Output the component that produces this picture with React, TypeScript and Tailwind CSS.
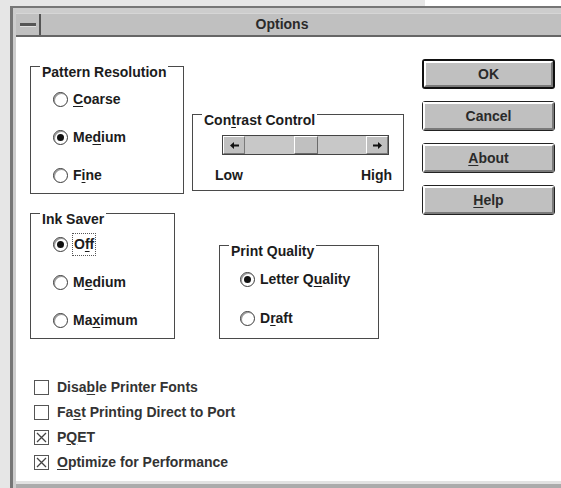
import React from "react";

const font = "font-['Liberation_Sans',Arial,sans-serif]";

type Mn = { pre: string; key: string; post: string };

const Text: React.FC<{ t: Mn }> = ({ t }) => (
  <span>
    {t.pre}
    <span className="underline underline-offset-2">{t.key}</span>
    {t.post}
  </span>
);

const Radio: React.FC<{ checked?: boolean; t: Mn; focus?: boolean }> = ({ checked, t, focus }) => (
  <div className="flex items-center h-[20px]">
    <div className="w-[15px] h-[15px] rounded-full border border-[#3a3a3a] bg-white shadow-[inset_1px_1px_0_#9a9a9a] flex items-center justify-center shrink-0">
      {checked && <div className="w-[7px] h-[7px] rounded-full bg-[#111]" />}
    </div>
    <div className={focus ? "ml-[4px] px-[1px] border border-dotted border-[#555]" : "ml-[5px]"}>
      <Text t={t} />
    </div>
  </div>
);

const Check: React.FC<{ checked?: boolean; t: Mn }> = ({ checked, t }) => (
  <div className="flex items-center h-[25px]">
    <div className="w-[15px] h-[15px] border border-[#555] bg-white flex items-center justify-center shrink-0">
      {checked && (
        <svg width="11" height="11" viewBox="0 0 11 11">
          <path d="M1 1 L10 10 M10 1 L1 10" stroke="#444" strokeWidth="1.3" />
        </svg>
      )}
    </div>
    <div className="ml-[8px] text-[#333]">
      <Text t={t} />
    </div>
  </div>
);

const Group: React.FC<{ title: React.ReactNode; className: string; children: React.ReactNode }> = ({
  title,
  className,
  children,
}) => (
  <div className={`relative border border-[#4a4a4a] shrink-0 ${className}`}>
    <div className="absolute top-[-3px] left-[9px] bg-white px-[2px] leading-[16px]">{title}</div>
    {children}
  </div>
);

const Button: React.FC<{ t: Mn; def?: boolean }> = ({ t, def }) => (
  <div
    className={`w-[133px] h-[30px] rounded-[3px] bg-[#c0c0c0] ${
      def ? "border-2 border-[#111]" : "border border-[#222]"
    }`}
  >
    <div className="h-full border-t-2 border-l-2 border-white border-b-2 border-r-2 border-b-[#7a7a7a] border-r-[#7a7a7a] flex items-center justify-center text-[#2a2a2a]">
      <Text t={t} />
    </div>
  </div>
);

const Arrow: React.FC<{ right?: boolean }> = ({ right }) => (
  <div className="w-[22px] h-full bg-[#c0c0c0] border-t border-l border-white border-b border-r border-b-[#7a7a7a] border-r-[#7a7a7a] flex items-center justify-center">
    <svg width="9" height="7" viewBox="0 0 9 7" className={right ? "rotate-180" : ""}>
      <path d="M0 3.5 L4 0 L4 2.5 L9 2.5 L9 4.5 L4 4.5 L4 7 Z" fill="#111" />
    </svg>
  </div>
);

export default function App() {
  return (
    <div className={`w-[561px] h-[488px] overflow-hidden bg-[#e6e6e6] text-[14px] font-bold text-[#1c1c1c] ${font}`}>
      <div className="flex h-[6px]">
        <div className="w-[425px] bg-[#e6e6e6]" />
        <div className="flex-1 bg-white" />
      </div>
      <div className="ml-[10px] h-[482px] border-t-2 border-l-[3px] border-[#767676] bg-[#cdcdcd] pt-[5px] pl-[3px] flex flex-col">
        {/* title bar */}
        <div className="flex h-[24px] bg-[#c0c0c0] border-t border-[#d6d6d6] border-b-2 border-b-[#666]">
          <div className="w-[25px] border-r-2 border-[#555] flex items-center">
            <div className="ml-[4px] w-[16px] h-[3px] bg-[#555] shadow-[0_1px_0_#e0e0e0]" />
          </div>
          <div className="flex-1 text-center pr-[38px] leading-[20px] text-[#2a2a2a]">Options</div>
        </div>

        {/* body */}
        <div className="h-[444px] bg-white flex items-start">
          <div className="w-[406px] pl-[14px] pt-[29px]">
            <div className="flex items-start">
              <Group title="Pattern Resolution" className="w-[154px] h-[128px] pl-[22px] pt-[22px] flex flex-col gap-[18px]">
                <Radio t={{ pre: "", key: "C", post: "oarse" }} />
                <Radio checked t={{ pre: "Me", key: "d", post: "ium" }} />
                <Radio t={{ pre: "F", key: "i", post: "ne" }} />
              </Group>
              <Group
                title={<Text t={{ pre: "Con", key: "t", post: "rast Control" }} />}
                className="ml-[8px] mt-[48px] w-[212px] h-[77px] pl-[29px] pt-[20px]"
              >
                <div className="w-[167px] h-[20px] border border-[#444] bg-[#c8c8c8] flex">
                  <Arrow />
                  <div className="flex-1 flex">
                    <div className="w-[49px]" />
                    <div className="w-[24px] h-full bg-[#c0c0c0] border-t border-l border-white border-b border-r border-b-[#6a6a6a] border-r-[#6a6a6a]" />
                  </div>
                  <Arrow right />
                </div>
                <div className="flex justify-between mt-[12px] ml-[-7px] mr-[11px] leading-[16px]">
                  <span>Low</span>
                  <span>High</span>
                </div>
              </Group>
            </div>

            <div className="flex items-start mt-[19px]">
              <Group title="Ink Saver" className="w-[145px] h-[126px] pl-[22px] pt-[20px] flex flex-col gap-[18px]">
                <Radio checked focus t={{ pre: "O", key: "f", post: "f" }} />
                <Radio t={{ pre: "M", key: "e", post: "dium" }} />
                <Radio t={{ pre: "Ma", key: "x", post: "imum" }} />
              </Group>
              <Group title="Print Quality" className="ml-[44px] mt-[32px] w-[160px] h-[94px] pl-[20px] pt-[23px] flex flex-col gap-[19px]">
                <Radio checked t={{ pre: "Letter Q", key: "u", post: "ality" }} />
                <Radio t={{ pre: "D", key: "r", post: "aft" }} />
              </Group>
            </div>

            <div className="mt-[36px] pl-[4px] flex flex-col">
              <Check t={{ pre: "Disa", key: "b", post: "le Printer Fonts" }} />
              <Check t={{ pre: "Fa", key: "s", post: "t Printing Direct to Port" }} />
              <Check checked t={{ pre: "P", key: "Q", post: "ET" }} />
              <Check checked t={{ pre: "", key: "O", post: "ptimize for Performance" }} />
            </div>
          </div>

          <div className="pt-[22px] flex flex-col gap-[12px]">
            <Button def t={{ pre: "OK", key: "", post: "" }} />
            <Button t={{ pre: "Cancel", key: "", post: "" }} />
            <Button t={{ pre: "", key: "A", post: "bout" }} />
            <Button t={{ pre: "", key: "H", post: "elp" }} />
          </div>
        </div>
        <div className="h-[3px] bg-[#e2e2e2]" />
        <div className="flex-1 bg-[#ababab]" />
      </div>
    </div>
  );
}
